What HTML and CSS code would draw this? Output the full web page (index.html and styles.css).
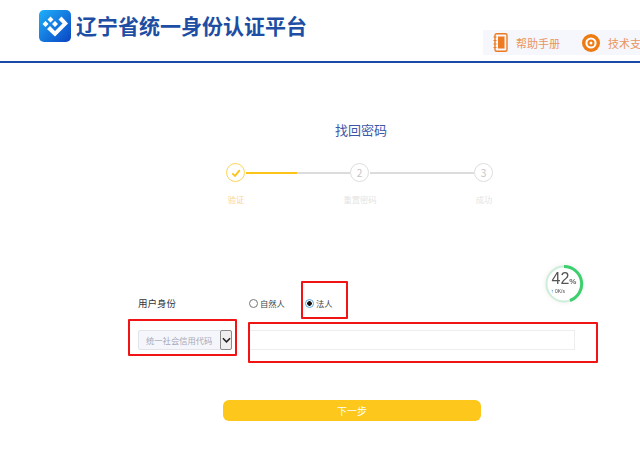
FILE: index.html
```html
<!DOCTYPE html>
<html lang="zh">
<head>
<meta charset="utf-8">
<title>找回密码</title>
<link rel="stylesheet" href="styles.css">
</head>
<body>
<div class="page">
  <header class="header">
    <svg class="logo" viewBox="0 0 32 32" width="32" height="32" aria-hidden="true">
      <defs><linearGradient id="lg" x1="0" y1="0" x2="1" y2="1"><stop offset="0" stop-color="#1fb0fa"/><stop offset="1" stop-color="#0a44c4"/></linearGradient></defs>
      <rect width="32" height="32" rx="5" fill="url(#lg)"/>
      <path d="M3.500 14 6.500 11 9.500 14 6.500 17Z M8.500 9.500 11.500 6.500 14.500 9.500 11.500 12.500Z M8 19 11 16 16 21 23.500 13.500 19.500 9.500 22.500 6.500 29 13.500 16 26.500Z M13 14 16 11 19 14 16 17Z" fill="#fff"/>
    </svg>
    <h1 class="brand">辽宁省统一身份认证平台</h1>
    <nav class="help">
      <a class="help-item">
        <svg class="help-icon" viewBox="0 0 15 19" width="15" height="19" aria-hidden="true">
          <rect x="2" y="0.800" width="12" height="17.400" rx="1.500" fill="none" stroke="#ee7a22" stroke-width="1.400"/>
          <rect x="5" y="3.500" width="6.500" height="12" fill="#ee7a22"/>
          <path d="M0.500 4H3.500M0.500 7.500H3.500M0.500 11H3.500M0.500 14.500H3.500" stroke="#ee7a22" stroke-width="1.200"/>
        </svg>
        <span>帮助手册</span>
      </a>
      <a class="help-item">
        <svg class="help-icon" viewBox="0 0 18 18" width="18" height="18" aria-hidden="true">
          <circle cx="9" cy="9" r="9" fill="#ee7a12"/>
          <circle cx="9" cy="9" r="5.600" fill="#fff"/>
          <circle cx="9" cy="9" r="3.500" fill="#ee7a12"/>
          <circle cx="9" cy="9" r="1.500" fill="#fff"/>
        </svg>
        <span>技术支</span>
      </a>
    </nav>
  </header>

  <main class="main">
    <h2 class="title">找回密码</h2>

    <div class="steps">
      <div class="step step-done">
        <span class="dot"><svg viewBox="0 0 12 12" width="10" height="10" aria-hidden="true"><path d="M1.500 6.500 4.800 9.500 10.500 2.500" fill="none" stroke="#fcc419" stroke-width="2.200"/></svg></span>
        <span class="step-label">验证</span>
      </div>
      <div class="line"><span class="line-fill"></span></div>
      <div class="step">
        <span class="dot">2</span>
        <span class="step-label">重置密码</span>
      </div>
      <div class="line"></div>
      <div class="step">
        <span class="dot">3</span>
        <span class="step-label">成功</span>
      </div>
    </div>

    <form class="form">
      <div class="row row-identity">
        <span class="row-label">用户身份</span>
        <label class="radio radio-first"><i class="radio-mark"></i>自然人</label>
        <label class="radio"><i class="radio-mark radio-on"></i>法人</label>
      </div>
      <div class="row row-code">
        <div class="select">
          <span class="select-text">统一社会信用代码</span>
          <span class="select-arrow"><svg viewBox="0 0 10 6" width="9" height="6" aria-hidden="true"><path d="M1 1 5 5 9 1" fill="none" stroke="#222" stroke-width="1.700"/></svg></span>
        </div>
        <div class="input"></div>
      </div>
      <button class="next" type="button">下一步</button>
    </form>
  </main>

  <div class="speed">
    <svg class="speed-ring" viewBox="0 0 40 40" width="40" height="40" aria-hidden="true">
      <circle cx="20" cy="20" r="17.500" fill="#fff" stroke="#cdeeda" stroke-width="2"/>
      <path d="M20 2.500A17.500 17.500 0 0 1 26 36.500" fill="none" stroke="#3ccf6e" stroke-width="3"/>
    </svg>
    <span class="speed-value">42<small>%</small></span>
    <span class="speed-rate"><b>↑</b> 0K/s</span>
  </div>

  <span class="mark mark-radio"></span>
  <span class="mark mark-select"></span>
  <span class="mark mark-input"></span>
</div>
</body>
</html>
```

FILE: styles.css
```css
* { box-sizing: border-box; }
html, body { margin: 0; padding: 0; background: #fff; }
body { font-family: "Noto Sans CJK SC", "Liberation Sans", sans-serif; }
.page { position: relative; width: 640px; height: 453px; overflow: hidden; }

.header {
  display: flex;
  height: 63px;
  padding: 10px 0 0 39px;
  border-bottom: 2px solid #1c48a8;
  overflow: hidden;
}
.logo { flex: none; }
.brand {
  margin: 0 0 0 5px;
  height: 31px;
  font-size: 21px;
  line-height: 31px;
  font-weight: 700;
  color: #1d4ea3;
  white-space: nowrap;
}
.help {
  flex: none;
  display: flex;
  gap: 22px;
  width: 157px;
  height: 25px;
  margin: 20px 0 0 176px;
  padding-left: 10px;
  background: #f5f7fd;
}
.help-item { display: flex; align-items: center; gap: 8px; flex: none; font-size: 11px; color: #ea9460; }
.help-icon { flex: none; }

.main { display: flex; flex-direction: column; }
.title {
  margin: 57px 0 0;
  padding-left: 82px;
  text-align: center;
  font-size: 13px;
  line-height: 20px;
  font-weight: 400;
  color: #3d57a8;
}

.steps {
  display: flex;
  align-items: flex-start;
  margin: 23px 0 0 226px;
  width: 268px;
}
.step { position: relative; flex: none; width: 20px; height: 20px; }
.dot {
  display: flex;
  align-items: center;
  justify-content: center;
  width: 19px;
  height: 19px;
  border: 1px solid #dedede;
  border-radius: 50%;
  font-size: 10px;
  color: #c4c4c4;
  background: #fff;
}
.step-done .dot { border-color: #fcd45c; }
.step-label {
  position: absolute;
  top: 29px;
  left: 50%;
  transform: translateX(-50%);
  font-size: 8.300px;
  line-height: 14px;
  color: #e4e4e4;
  white-space: nowrap;
}
.step-done .step-label { color: #fcd68a; }
.line { flex: 1; height: 2px; margin-top: 9px; background: #dcdcdc; }
.line-fill { display: block; width: 51px; height: 2px; background: #fcc419; }

.form { display: flex; flex-direction: column; margin: 0 0 0 138px; }
.row { display: flex; align-items: center; }
.row-identity { height: 20px; margin-top: 110px; font-size: 9.500px; color: #333; }
.row-label { width: 111px; flex: none; }
.radio { display: flex; align-items: center; gap: 2px; font-size: 8.300px; color: #444; }
.radio-first { width: 56px; flex: none; }
.radio-mark {
  display: block;
  width: 9px;
  height: 9px;
  border: 1px solid #777;
  border-radius: 50%;
  background: #fff;
}
.radio-on { border-color: #5aa6dd; background: radial-gradient(circle, #111 0 2px, #fff 2.600px); }

.row-code { margin-top: 17px; height: 20px; }
.select {
  display: flex;
  flex: none;
  width: 94px;
  height: 20px;
  background: #f5f6fb;
  border: 1px solid #e2e4ea;
  border-radius: 2px;
}
.select-text {
  flex: 1;
  font-size: 8.300px;
  line-height: 18px;
  padding-left: 7px;
  color: #a6a9b8;
  white-space: nowrap;
}
.select-arrow {
  display: flex;
  align-items: center;
  justify-content: center;
  flex: none;
  width: 12px;
  height: 20px;
  margin: -1px -1px 0 0;
  background: #efefef;
  border: 1px solid #8a8a8a;
  border-radius: 2px;
}
.input {
  flex: none;
  width: 326px;
  height: 20px;
  margin: -1px 0 0 17px;
  border: 1px solid #eeeeee;
  background: #fff;
}
.next {
  width: 258px;
  height: 21px;
  margin: 50px 0 0 85px;
  padding: 0;
  border: 0;
  border-radius: 6px;
  background: #fdc71c;
  color: #fff;
  font: 400 10px/21px "Noto Sans CJK SC", sans-serif;
}

.speed {
  position: absolute;
  left: 544px;
  top: 264px;
  width: 40px;
  height: 40px;
  filter: drop-shadow(0 0 2px rgba(0,0,0,.08));
}
.speed-ring { display: block; }
.speed-value {
  position: absolute;
  top: 6px;
  left: 0;
  width: 40px;
  text-align: center;
  font: 400 16px/17px "Liberation Sans", sans-serif;
  color: #555;
}
.speed-value small { font-size: 8px; font-weight: 700; color: #666; }
.speed-rate {
  position: absolute;
  top: 24px;
  left: 7px;
  font: 400 5px/7px "Liberation Sans", sans-serif;
  color: #444;
  white-space: nowrap;
}
.speed-rate b { color: #1f7fe0; }

.mark { position: absolute; border: 2px solid #f01414; border-radius: 1px; }
.mark-radio { left: 301px; top: 281px; width: 47px; height: 38px; }
.mark-select { left: 128px; top: 319px; width: 109px; height: 37px; }
.mark-input { left: 248px; top: 322px; width: 350px; height: 41px; }
```
